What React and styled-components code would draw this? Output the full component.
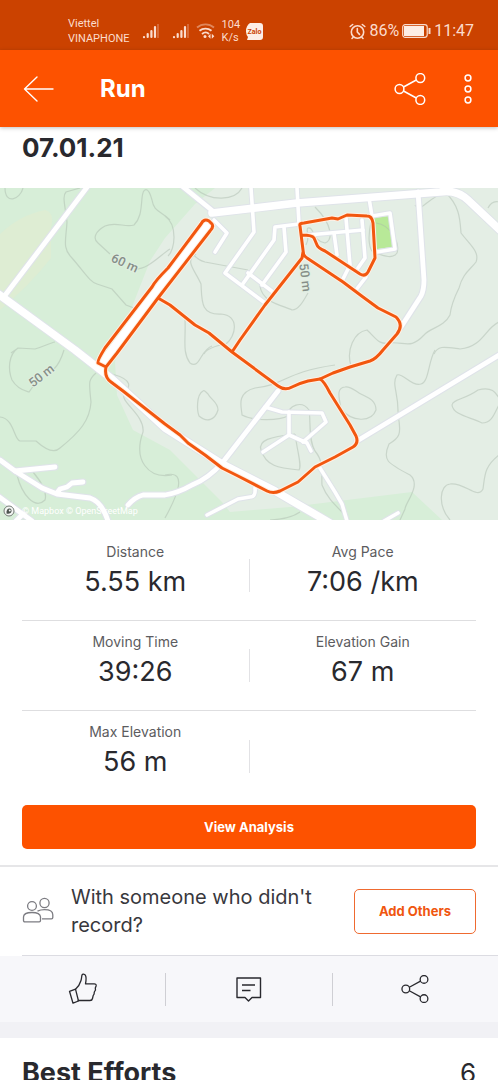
import React from "react";
import styled, { createGlobalStyle } from "styled-components";

const GlobalStyle = createGlobalStyle`
  *, *::before, *::after { box-sizing: border-box; }
  body {
    margin: 0;
    background: #fff;
    color: #29292e;
    font-family: Inter, "Liberation Sans", sans-serif;
  }
  button { font-family: inherit; margin: 0; padding: 0; cursor: pointer; }
`;

const Screen = styled.div`
  display: flex;
  flex-direction: column;
  height: 100vh;
  overflow: hidden;
`;

const StatusBar = styled.div`
  display: flex;
  flex: none;
  align-items: center;
  justify-content: space-between;
  height: 50px;
  padding: 12px 24px 0 68px;
  background: #cb4200;
  color: #fbdccd;
  font-family: Roboto, sans-serif;
`;

const StatusGroup = styled.div`
  display: flex;
  align-items: center;
  gap: ${(p) => p.$gap}px;
  svg { display: block; }
`;

const TinyText = styled.div`
  font-size: ${(p) => p.$size}px;
  line-height: ${(p) => p.$line}px;
`;

const StatusText = styled.span`
  font-size: 16px;
  line-height: 20px;
`;

const AppBar = styled.header`
  display: flex;
  flex: none;
  align-items: center;
  height: 77px;
  padding: 0 22px;
  background: #fd5200;
  color: #fff;
  box-shadow: 0 1px 4px rgba(0, 0, 0, 0.25);
  z-index: 1;
`;

const Title = styled.h1`
  flex: 1;
  margin: 0 0 0 44px;
  font-size: 24px;
  line-height: 32px;
  font-weight: 700;
`;

const IconButton = styled.button`
  display: flex;
  align-items: center;
  justify-content: center;
  width: ${(p) => p.$width}px;
  height: 44px;
  border: 0;
  background: none;
  color: inherit;
`;

const HeaderActions = styled.div`
  display: flex;
  gap: 34px;
`;

const Content = styled.main`
  flex: 1;
  min-height: 0;
  overflow-y: auto;
  scrollbar-width: none;
`;

const DateHeading = styled.h2`
  margin: 0;
  padding: 5px 22px 24px;
  font-size: 26px;
  line-height: 32px;
  font-weight: 700;
`;

const MapFrame = styled.section`
  position: relative;
  svg { display: block; width: 100%; height: auto; }
`;

const MapCredit = styled.div`
  position: absolute;
  left: 3px;
  bottom: 2px;
  display: flex;
  align-items: center;
  gap: 7px;
  font: 9px/14px Roboto, sans-serif;
  color: #fff;
  svg { width: 12px; height: 12px; }
  a { color: inherit; text-decoration: none; }
`;

const Stats = styled.section`
  padding: 11px 22px 0;
`;

const StatRow = styled.div`
  display: grid;
  grid-template-columns: 1fr 1px 1fr;
  height: 90px;
  border-bottom: ${(p) => (p.$last ? "0" : "1px solid #dedee0")};
`;

const Stat = styled.div`
  display: flex;
  flex-direction: column;
  align-items: center;
  padding-top: 11px;
`;

const StatLabel = styled.span`
  font-size: 14px;
  line-height: 20px;
  color: #5c5c60;
`;

const StatValue = styled.span`
  font-size: 27px;
  line-height: 40px;
`;

const Divider = styled.span`
  align-self: center;
  width: 1px;
  height: 33px;
  background: ${(p) => p.$color || "#e2e2e5"};
`;

const PrimaryButton = styled.button`
  display: block;
  width: 100%;
  height: 44px;
  margin: 4px 0 16px;
  border: 0;
  border-radius: 5px;
  background: #fd5200;
  color: #fff;
  font-size: 13px;
  font-weight: 700;
`;

const Rule = styled.hr`
  height: 2px;
  margin: 0;
  border: 0;
  background: #e6e6e8;
`;

const Companions = styled.section`
  display: flex;
  align-items: center;
  height: 89px;
  margin-left: 22px;
  padding-right: 22px;
  border-bottom: 1px solid #dcdce2;
`;

const Question = styled.p`
  flex: 1;
  margin: 0 24px 0 17px;
  font-size: 20px;
  line-height: 28px;
  color: #38383d;
`;

const OutlineButton = styled.button`
  width: 122px;
  height: 45px;
  border: 1px solid #ef6a30;
  border-radius: 5px;
  background: #fff;
  color: #f0560f;
  font-size: 13px;
  font-weight: 700;
`;

const Actions = styled.div`
  display: grid;
  grid-template-columns: 1fr 1px 1fr 1px 1fr;
  height: 66px;
  background: #f7f7fa;
`;

const ActionButton = styled.button`
  display: flex;
  align-items: center;
  justify-content: center;
  border: 0;
  background: none;
  color: #29292e;
`;

const Band = styled.div`
  height: 16px;
  background: #f1f1f5;
`;

const EffortsHeader = styled.section`
  display: flex;
  align-items: center;
  justify-content: space-between;
  padding: 18px 22px;
`;

const EffortsTitle = styled.h2`
  margin: 0;
  font-size: 27px;
  line-height: 34px;
  font-weight: 700;
`;

const EffortsCount = styled.span`
  font-size: 26px;
  line-height: 34px;
`;

const Signal = () => (
  <svg width="18" height="16" viewBox="0 0 18 16" fill="none" stroke="currentColor" strokeWidth="2.200" strokeLinecap="round">
    <path d="M2 14v.2M5.700 11v3M9.400 8v6M13 4v10" />
    <path d="M16 1v14" strokeWidth="1.500" opacity=".35" strokeLinecap="butt" />
  </svg>
);

const Wifi = () => (
  <svg width="20" height="16" viewBox="0 0 20 16" fill="none" stroke="currentColor" strokeWidth="1.800">
    <path d="M1 4.500C6 .2 13 .2 18 4.500" opacity=".45" />
    <path d="M3.500 7.800C7 4.800 12 4.800 15.500 7.800" />
    <path d="M6 11c2.300-2 5-2 7 0" />
    <circle cx="9" cy="13.500" r="1.500" fill="currentColor" stroke="none" />
    <path d="M14.500 10.800 12 13.300l2.500 2.500zM15.800 10.800l2.500 2.500-2.500 2.500z" fill="currentColor" stroke="none" />
  </svg>
);

const Zalo = () => (
  <svg width="17" height="17" viewBox="0 0 17 17">
    <path d="M4 0h10a3 3 0 0 1 3 3v11a3 3 0 0 1-3 3H4H1l1-3A9 9 0 0 1 0 8 10 10 0 0 1 4 0z" fill="#fdeee6" />
    <text x="8.500" y="10.500" fontSize="7" fontWeight="700" textAnchor="middle" fill="#cb4200">Zalo</text>
  </svg>
);

const Alarm = () => (
  <svg width="17" height="17" viewBox="0 0 17 17" fill="none" stroke="currentColor" strokeWidth="1.600" strokeLinecap="round">
    <circle cx="8.500" cy="9" r="6.200" />
    <path d="M8.300 5.500V9l2.200 2.400M1.200 3.500l2.500-2M15.800 3.500l-2.500-2M4 14.500l-1 1M13 14.500l1 1" />
  </svg>
);

const Battery = () => (
  <svg width="29" height="14" viewBox="0 0 29 14" fill="none" stroke="currentColor">
    <rect x=".7" y=".7" width="24.500" height="12.600" rx="2.500" strokeWidth="1.200" />
    <rect x="2" y="2" width="20" height="10" fill="#fdeee6" stroke="none" />
    <path d="M27.500 4v6" strokeWidth="2" />
  </svg>
);

const BackArrow = () => (
  <svg width="32" height="28" viewBox="0 0 32 28" fill="none" stroke="currentColor" strokeWidth="1.400" strokeLinecap="round" strokeLinejoin="round">
    <path d="M14 2 1.500 14 14 26M1.500 14H30" />
  </svg>
);

const Share = ({ size }) => (
  <svg width={size} height={size} viewBox="0 0 32 32" fill="none" stroke="currentColor" strokeWidth="1.500">
    <circle cx="5.500" cy="16" r="4.400" />
    <circle cx="26.300" cy="5" r="4.400" />
    <circle cx="26.300" cy="27" r="4.400" />
    <path d="M9.500 14 22.300 7M9.500 18l12.800 7" />
  </svg>
);

const More = () => (
  <svg width="8" height="30" viewBox="0 0 8 30" fill="none" stroke="currentColor" strokeWidth="1.500">
    <circle cx="4" cy="4" r="2.900" />
    <circle cx="4" cy="15" r="2.900" />
    <circle cx="4" cy="26" r="2.900" />
  </svg>
);

const People = () => (
  <svg width="32" height="28" viewBox="0 0 32 28" fill="none" stroke="#7c7c82" strokeWidth="1.300" strokeLinejoin="round">
    <circle cx="10" cy="9" r="4.400" />
    <circle cx="22.500" cy="6" r="4.600" />
    <path d="M1.500 23v-3C1.500 17 4.500 15.500 10 15.500S18.500 17 18.500 20v3.500c0 .8-.5 1.300-1.300 1.300H2.800c-.8 0-1.300-.5-1.300-1.300z" />
    <path d="M15.500 14.200c2-1 4-1.500 7-1.500 5.500 0 8.300 2.200 8.300 5v2.800c0 .8-.5 1.300-1.300 1.300H20" />
  </svg>
);

const Thumb = () => (
  <svg width="30" height="32" viewBox="0 0 30 32" fill="none" stroke="currentColor" strokeWidth="1.300" strokeLinejoin="round" strokeLinecap="round">
    <path d="M1.500 18.300 7.500 16.200 10.500 28 5 30.200z" />
    <path d="M7.500 16.200C10 14 12 11 13 7.500c.6-2 .6-4 1-5.500.5-1.200 2.500-1 3.300.2 1.200 1.800 1 4.500.2 8.600h8.700c1.500 0 2.200 1 1.900 2.200l-.8 2 .2 2-1.200 2-.2 2-1 1.800-.6 2.700c-.3 1.500-1 2-2.500 2H10.200" />
  </svg>
);

const Comment = () => (
  <svg width="28" height="27" viewBox="0 0 28 27" fill="none" stroke="currentColor" strokeWidth="1.400" strokeLinejoin="round">
    <path d="M2 2h23.500v19.500H17L13.500 25 10 21.500H2z" />
    <path d="M7 9h13M7 14.500h8.500" />
  </svg>
);

const minorRoads = [
  "M214 220 227 233 215 252",
  "M251 188 254 232 225 273 265 303",
  "M297 188 299 224 275 227 274 240 242 285",
  "M284 227 286 252 262 285",
  "M248 273 273 292",
  "M308 235 363 230",
  "M334 233 337 255",
  "M346 218 350 265 343 279",
  "M362 220 365 258 358 268",
  "M366 277 356 290",
  "M369 198 372 216 390 213 395 249 377 252",
  "M265 407 282 412 322 413 326 422 303 442",
  "M289 412 289 435 263 452",
  "M289 435 307 443 311 451",
  "M255 488Q256 497 250 497L238 499 207 515",
  "M320 468 335 492 342 504 347 521",
  "M398 513 384 521",
];

const streets = [
  "M182 186 214 212",
  "M88 186 3 298",
  "M418 192 424 280Q424 290 421 296L401 327",
  "M499 355 357 441",
  "M278 391 223 462Q208 479 192 485 178 493 165 495L143 495Q135 497 128 505",
  "M0 460 15 471 42 488 57 494 90 498Q102 502 108 521",
  "M15 471 55 467",
  "M57 493 60 489 67 487 72 483 83 482",
  "M-2 496 32 521M16 521 23 514",
];

const highways = [
  "M-3 293 75 350 112 379 165 428 222 464 275 491 330 523",
  "M212 213 297 203 440 192Q456 189 468 200L502 232",
];

const contours = [
  "M5 188C5 205 20 200 23 188M80 188 66 192C62 196 65 205 67 222 66 240 62 248 72 258 85 273 90 282 97 284L112 289 126 305 134 308",
  "M170 220C160 210 154 212 152 200 148 185 143 188 142 198 141 212 140 219 134 225 125 228 116 221 105 226 96 231 92 238 98 243L110 254M134 269C148 270 160 255 170 249",
  "M11 353 18 348 35 349C45 346 50 343 55 342M64 350C61 360 56 367 54 369M18 348C8 355 8 370 12 380 18 390 26 391 29 392L34 385",
  "M0 417C14 418 14 440 20 441L36 441C46 450 54 454 60 448 80 432 90 420 91 402 89 382 88 380 96 373M112 374C134 380 130 387 124 394 120 402 145 415 143 432 133 460 148 479 172 475",
  "M165 216C178 225 175 250 168 256M195 188C210 202 235 201 242 188",
  "M192 253C196 258 201 261 205 262L248 270M196 254C184 261 195 270 201 284 202 300 200 315 221 314 240 316 236 336 226 344 214 346 206 350 204 354M185 319C186 340 182 352 190 363 200 370 200 350 212 346",
  "M260 286C262 303 285 306 292 310 299 310 304 300 308 293",
  "M306 245C311 236 305 230 308 228 315 227 311 240 325 243 333 240 333 225 315 207M371 222C367 240 370 250 373 252 382 255 392 260 397 253 400 243 391 225 376 223",
  "M415 205C420 214 425 200 445 192 460 206 460 220 461 233 470 245 480 252 476 262 470 270 463 273 459 288 453 300 451 306 450 315 444 327 430 328 424 335 410 350 405 341 388 343M351 366C346 350 354 332 367 330 376 338 378 345 390 343",
  "M434 354C438 345 445 347 460 349 483 347 485 328 499 322M488 208Q492 200 499 202",
  "M435 350C428 362 429 382 421 384 412 387 402 372 397 375 391 385 399 392 398 415 402 435 399 438 389 444 382 460 387 463 410 475 422 485 405 503 405 509L400 520",
  "M345 387C335 388 340 400 341 409 352 422 371 423 376 410 376 399 366 397 359 393 354 390 350 386 345 387",
  "M452 405C453 399 464 400 478 390 492 386 496 393 499 398M452 405C453 415 470 417 482 423 493 423 495 411 499 405",
  "M450 520C437 505 440 485 450 484 465 482 477 500 483 489 485 475 484 467 499 455",
  "M335 365C285 372 285 385 255 388 235 393 242 409 242 415 255 422 280 420 288 416 288 405 302 400 309 410 311 420 308 440 315 451 325 463 321 475 322 485 327 498 335 505 345 515",
  "M203 391C196 395 197 411 199 416 207 423 215 420 218 410 218 402 211 400 208 394 205 391 204 390 203 391",
  "M295 434C270 437 258 440 261 450 266 466 278 468 299 470 302 466 298 455 295 434",
  "M17 475C22 495 35 510 45 500 48 490 38 478 33 472M165 475C190 469 175 500 165 518M270 520Q290 519 300 512",
];

const route =
  "M158 298 117 353 106 367 98 363Q97 361 105 348L152 287Q155 281 168 268L201 224Q204 218 209 221L212 224Q214 227 210 231L158 298 170 305 195 325 209 333 232 352 278 386Q285 391 292 387 300 383 308 381L320 379 333 373 350 367 370 361Q376 359 383 350L397 334Q404 325 396 317L378 308 363 297 343 282 334 276 307 258Q303 256 303 250L300 226Q299 223 304 223L332 218 338 219 347 215 367 216Q372 216 373 223L375 258 368 272Q365 277 360 274L325 251Q318 248 317 245L314 238Q312 235 302 235M303 252 302 258 265 305 240 340 232 352M106 367Q104 377 111 382L123 391 165 424 180 435 188 443 205 455 222 468 238 476 267 491Q273 494 280 491L298 482 315 467 335 457 353 447Q359 443 356 436L350 425 330 393Q324 381 320 379";

const RouteMap = () => (
  <svg viewBox="0 188 498 332" role="img" aria-label="Map of the run">
    <rect y="188" width="498" height="332" fill="#e4eee5" />
    <path d="M0 188H215L195 204 165 238 150 261 132 307 115 362 117 395 133 430 170 450 195 475 222 502 230 512 290 507 412 492 442 520H0z" fill="#d7eed8" />
    <path d="M0 234Q20 215 45 210 55 212 51 228V258Q30 285 0 310z" fill="#deedd3" />
    <path d="M373 218 389 216 392 247 377 249z" fill="#b8e998" />
    <g fill="none" stroke="#a9b8ab" strokeWidth="1.200" opacity=".45">
      {contours.map((d) => <path key={d} d={d} />)}
    </g>
    <g fill="none" strokeLinecap="round" strokeLinejoin="round">
      <g stroke="#dfe3e9">
        {minorRoads.map((d) => <path key={d} d={d} strokeWidth="5.500" />)}
        {streets.map((d) => <path key={d} d={d} strokeWidth="7" />)}
        {highways.map((d) => <path key={d} d={d} strokeWidth="9.500" />)}
      </g>
      <g stroke="#fff">
        {minorRoads.map((d) => <path key={d} d={d} strokeWidth="3.600" />)}
        {streets.map((d) => <path key={d} d={d} strokeWidth="4.800" />)}
        {highways.map((d) => <path key={d} d={d} strokeWidth="7.600" />)}
      </g>
      <path d="M102 364 207 225" stroke="#fff" strokeWidth="9" />
      <path d={route} stroke="#fff0e4" strokeWidth="5" />
      <path d={route} stroke="#f2570f" strokeWidth="3" />
    </g>
    <g fill="#868e88" stroke="#e0eee1" strokeWidth="2" paintOrder="stroke" fontFamily="Roboto, sans-serif" fontSize="12.500" fontWeight="500" textAnchor="middle">
      <text transform="translate(123 267) rotate(25)">60 m</text>
      <text transform="translate(301 278) rotate(83)">50 m</text>
      <text transform="translate(44 379) rotate(-38)">50 m</text>
    </g>
  </svg>
);

const rows = [
  [["Distance", "5.55 km"], ["Avg Pace", "7:06 /km"]],
  [["Moving Time", "39:26"], ["Elevation Gain", "67 m"]],
  [["Max Elevation", "56 m"]],
];

const StatCell = ({ stat }) => (
  <Stat>
    <StatLabel>{stat[0]}</StatLabel>
    <StatValue>{stat[1]}</StatValue>
  </Stat>
);

export default function App() {
  return (
    <Screen>
      <GlobalStyle />
      <StatusBar>
        <StatusGroup $gap={6}>
          <StatusGroup $gap={12}>
            <TinyText $size={11} $line={15}>Viettel<br />VINAPHONE</TinyText>
            <Signal />
            <Signal />
          </StatusGroup>
          <Wifi />
          <TinyText $size={11} $line={13}>104<br />K/s</TinyText>
          <Zalo />
        </StatusGroup>
        <StatusGroup $gap={3}>
          <Alarm />
          <StatusText>86%</StatusText>
          <Battery />
          <StatusText>11:47</StatusText>
        </StatusGroup>
      </StatusBar>
      <AppBar>
        <IconButton $width={34} aria-label="Back"><BackArrow /></IconButton>
        <Title>Run</Title>
        <HeaderActions>
          <IconButton $width={32} aria-label="Share"><Share size={32} /></IconButton>
          <IconButton $width={16} aria-label="More options"><More /></IconButton>
        </HeaderActions>
      </AppBar>
      <Content>
        <DateHeading>07.01.21</DateHeading>
        <MapFrame>
          <RouteMap />
          <MapCredit>
            <svg viewBox="0 0 12 12" aria-hidden="true">
              <circle cx="6" cy="6" r="5" fill="#f4f6f4" stroke="#737a75" />
              <path d="M3.500 8.500C3 5 5 3 7 3.500 9 4 9 7 7.500 8 6 9 4.500 8.700 3.500 8.500z" fill="#4d5550" />
              <circle cx="6.800" cy="5.500" r="1" fill="#f4f6f4" />
            </svg>
            <span><a href="#mapbox">© Mapbox</a> <a href="#osm">© OpenStreetMap</a></span>
          </MapCredit>
        </MapFrame>
        <Stats>
          {rows.map((row, i) => (
            <StatRow key={row[0][0]} $last={i === rows.length - 1}>
              <StatCell stat={row[0]} />
              <Divider />
              {row[1] && <StatCell stat={row[1]} />}
            </StatRow>
          ))}
          <PrimaryButton>View Analysis</PrimaryButton>
        </Stats>
        <Rule />
        <Companions>
          <People />
          <Question>With someone who didn't record?</Question>
          <OutlineButton>Add Others</OutlineButton>
        </Companions>
        <Actions>
          <ActionButton aria-label="Give kudos"><Thumb /></ActionButton>
          <Divider $color="#cfcfd4" />
          <ActionButton aria-label="Comment"><Comment /></ActionButton>
          <Divider $color="#cfcfd4" />
          <ActionButton aria-label="Share activity"><Share size={28} /></ActionButton>
        </Actions>
        <Band />
        <EffortsHeader>
          <EffortsTitle>Best Efforts</EffortsTitle>
          <EffortsCount>6</EffortsCount>
        </EffortsHeader>
      </Content>
    </Screen>
  );
}
